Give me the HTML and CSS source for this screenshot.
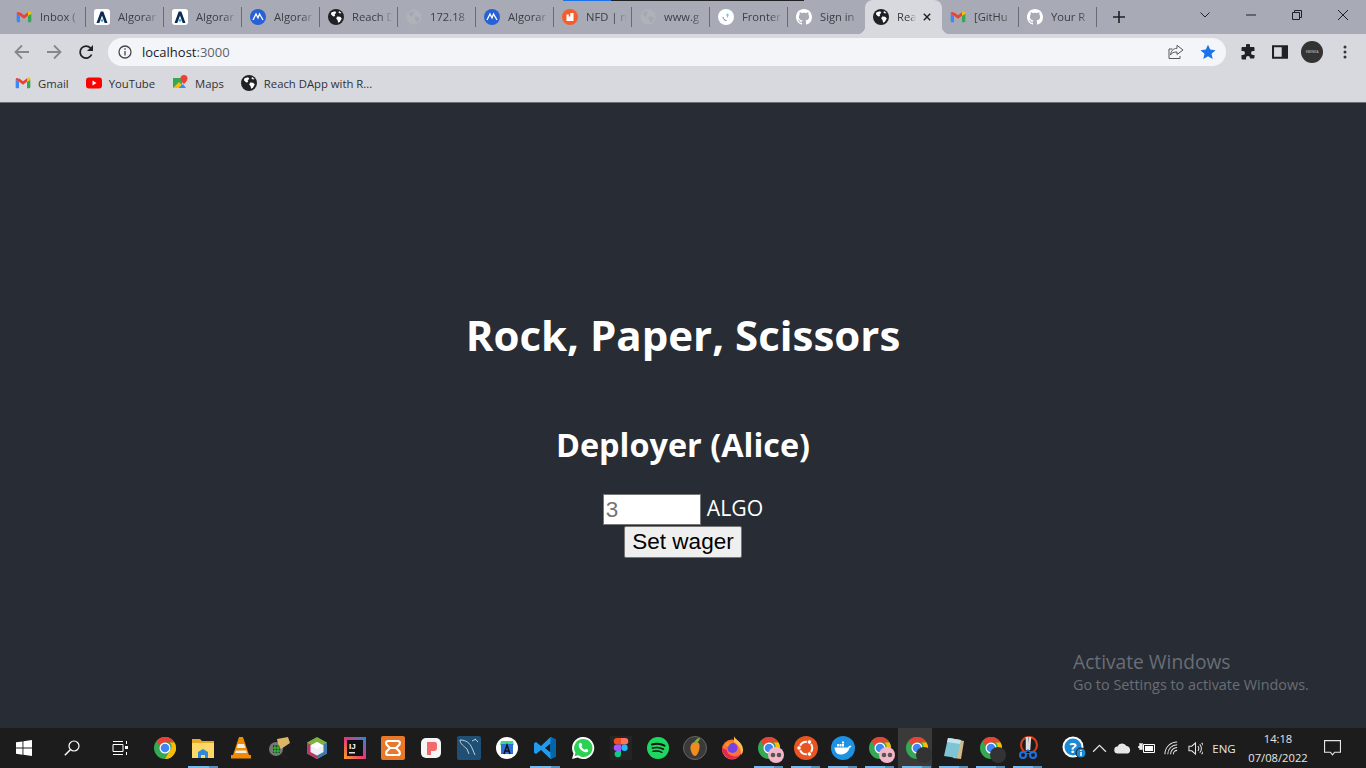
FILE: index.html
```html
<!DOCTYPE html>
<html lang="en">
<head>
  <meta charset="UTF-8" />
  <title>Rock, Paper, Scissors</title>
  <link rel="stylesheet" href="styles.css">
</head>
<body>

  <!-- shared icons -->
  <svg class="defs" aria-hidden="true">
    <symbol id="gmail" viewBox="0 0 24 24">
      <path fill="#4285f4" d="M1 7v11.5A1.5 1.5 0 002.5 20H6V10z"/>
      <path fill="#34a853" d="M18 10v10h3.500a1.500 1.500 0 001.500-1.500V7z"/>
      <path fill="#ea4335" d="M6 10V5l6 4.500L18 5v5l-6 4.500zM1 7c0-2 2.300-3 3.800-1.900L6 6v4z"/>
      <path fill="#fbbc04" d="M18 5l1.200-.9C20.700 3 23 4 23 6v1l-5 3z"/>
    </symbol>
    <symbol id="globe" viewBox="0 0 16 16">
      <circle cx="8" cy="8" r="8" fill="#202124"/>
      <path fill="#fff" d="M3.500 3.200l3.600-.9 1.200 1.500-1.700 1.600.6 1.500-2 .6-2.300-2.300zM9.200 7.400l3 .3 1.600 1.700-1.900 3.300-1.700 1-.7-2.800-1.300-1.500zM11 1.900l2.500 2-1.500.6-1.500-1.100z"/>
    </symbol>
    <symbol id="globe-grey" viewBox="0 0 16 16">
      <circle cx="8" cy="8" r="7.500" fill="#b0b2b9"/>
      <path fill="#a6a8b0" d="M3.500 3.200l3.600-.9 1.200 1.500-1.700 1.600.6 1.500-2 .6-2.300-2.300zM9.200 7.400l3 .3 1.600 1.700-1.900 3.300-1.700 1-.7-2.800-1.300-1.500z"/>
    </symbol>
    <symbol id="algo-a" viewBox="0 0 16 16">
      <rect width="16" height="16" rx="3" fill="#fff"/>
      <path fill="#0b2a55" d="M6.700 2.500h2.600L13.500 14h-2.800L8 6.500 5.300 14H2.500z"/>
      <circle cx="8" cy="11.500" r="1.300" fill="#2aa8e0"/>
    </symbol>
    <symbol id="algo-m" viewBox="0 0 16 16">
      <circle cx="8" cy="8" r="8" fill="#2860d6"/>
      <path fill="none" stroke="#fff" stroke-width="1.300" d="M3 11l3-6 2 4 1.500-4 3.500 6"/>
    </symbol>
    <symbol id="nfd" viewBox="0 0 16 16">
      <circle cx="8" cy="8" r="8" fill="#f65c2e"/>
      <path fill="#fff" d="M4.500 5.500h2.300v2h1.500V4h3.200v8h-7z"/>
    </symbol>
    <symbol id="frontend" viewBox="0 0 16 16">
      <circle cx="8" cy="8" r="8" fill="#fff"/>
      <path fill="none" stroke="#4f7fd8" stroke-width="1" d="M5 8c0 2 1.500 3.500 3.500 3.500"/>
      <path stroke="#7cc4e8" stroke-width="1.200" d="M9.500 4.500v4M11 6h-3"/>
    </symbol>
    <symbol id="github" viewBox="0 0 16 16">
      <circle cx="8" cy="8" r="8" fill="#a8abb6"/>
      <path fill="#fff" d="M8 0C3.580 0 0 3.580 0 8c0 3.540 2.290 6.530 5.470 7.590.4.070.55-.17.55-.38 0-.19-.01-.82-.01-1.490-2.010.37-2.530-.49-2.690-.94-.09-.23-.48-.94-.82-1.130-.28-.15-.68-.52-.01-.53.63-.01 1.080.58 1.230.82.72 1.210 1.870.87 2.330.66.070-.52.28-.87.51-1.070-1.780-.2-3.640-.89-3.640-3.950 0-.87.31-1.590.82-2.150-.08-.2-.36-1.020.08-2.120 0 0 .67-.21 2.200.82.64-.18 1.320-.27 2-.27.68 0 1.360.09 2 .27 1.530-1.040 2.200-.82 2.200-.82.44 1.100.16 1.920.08 2.120.51.56.82 1.270.82 2.150 0 3.070-1.870 3.750-3.650 3.950.29.25.54.73.54 1.480 0 1.070-.01 1.930-.01 2.200 0 .21.15.46.55.38A8.013 8.013 0 0016 8c0-4.420-3.580-8-8-8z"/>
    </symbol>
    <symbol id="chrome" viewBox="0 0 24 24">
      <circle cx="12" cy="12" r="11" fill="#34a853"/>
      <path fill="#ea4335" d="M12 1a11 11 0 019.530 5.500H12a5.500 5.500 0 00-5.200 3.700L3.600 4.900A11 11 0 0112 1z"/>
      <path fill="#fbbc04" d="M21.530 6.500A11 11 0 0112 23l4.760-8.250a5.500 5.500 0 000-8.250z"/>
      <circle cx="12" cy="12" r="5.500" fill="#fff"/>
      <circle cx="12" cy="12" r="4.300" fill="#4285f4"/>
    </symbol>
  </svg>

  <div class="browser">
    <div class="progress"><span class="progress-blue"></span><span class="progress-dark"></span></div>

    <div class="tabstrip">
      <div class="tab"><svg class="favicon"><use href="#gmail"/></svg><span class="tab-label">Inbox (</span></div>
      <div class="tab"><svg class="favicon"><use href="#algo-a"/></svg><span class="tab-label">Algorar</span></div>
      <div class="tab"><svg class="favicon"><use href="#algo-a"/></svg><span class="tab-label">Algorar</span></div>
      <div class="tab"><svg class="favicon"><use href="#algo-m"/></svg><span class="tab-label">Algorar</span></div>
      <div class="tab"><svg class="favicon"><use href="#globe"/></svg><span class="tab-label">Reach D</span></div>
      <div class="tab"><svg class="favicon"><use href="#globe-grey"/></svg><span class="tab-label">172.18</span></div>
      <div class="tab"><svg class="favicon"><use href="#algo-m"/></svg><span class="tab-label">Algorar</span></div>
      <div class="tab"><svg class="favicon"><use href="#nfd"/></svg><span class="tab-label">NFD | n</span></div>
      <div class="tab"><svg class="favicon"><use href="#globe-grey"/></svg><span class="tab-label">www.g</span></div>
      <div class="tab"><svg class="favicon"><use href="#frontend"/></svg><span class="tab-label">Fronter</span></div>
      <div class="tab tab-short tab-before-active"><svg class="favicon"><use href="#github"/></svg><span class="tab-label">Sign in</span></div>
      <div class="tab tab-short tab-active">
        <svg class="favicon"><use href="#globe"/></svg><span class="tab-label">Rea</span>
        <svg class="tab-close" viewBox="0 0 10 10"><path d="M1 1l8 8M9 1l-8 8"/></svg>
      </div>
      <div class="tab tab-short"><svg class="favicon"><use href="#gmail"/></svg><span class="tab-label">[GitHu</span></div>
      <div class="tab"><svg class="favicon"><use href="#github"/></svg><span class="tab-label">Your R</span></div>
      <svg class="new-tab" viewBox="0 0 12 12"><path d="M6 0v12M0 6h12"/></svg>
      <div class="window-controls">
        <span class="win-btn"><svg viewBox="0 0 10 6"><path d="M.5.500L5 5l4.500-4.500"/></svg></span>
        <span class="win-btn"><svg viewBox="0 0 10 2"><path d="M0 1h10"/></svg></span>
        <span class="win-btn"><svg viewBox="0 0 10 10"><path d="M.5 2.500h7v7h-7zM2.500 2.500v-2h7v7h-2"/></svg></span>
        <span class="win-btn"><svg viewBox="0 0 10 10"><path d="M0 0l10 10M10 0L0 10"/></svg></span>
      </div>
    </div>

    <div class="toolbar">
      <svg class="nav-icon nav-off" viewBox="0 0 16 16"><path d="M15 8H2M8 1.500L1.500 8 8 14.500"/></svg>
      <svg class="nav-icon nav-off" viewBox="0 0 16 16"><path d="M1 8h13M8 1.500L14.500 8 8 14.500"/></svg>
      <svg class="nav-icon" viewBox="0 0 16 16"><path d="M13.600 10.500A6 6 0 1112.500 4L14 5.500"/><path class="solid" d="M15 1v6H9z"/></svg>
      <div class="omnibox">
        <svg class="info-icon" viewBox="0 0 14 14"><circle cx="7" cy="7" r="6"/><path d="M7 6v4.500M7 3.300v1.400"/></svg>
        <span class="url">localhost<span class="url-port">:3000</span></span>
        <svg class="share-icon" viewBox="0 0 16 16"><path d="M9 1.500v-.2l6 4.700-6 4.500V8C5.500 8 3.500 9 2.500 11 3 7 5 4.500 9 4.300zM4.500 5H1v9.500h11V12"/></svg>
        <svg class="star-icon" viewBox="0 0 16 16"><path d="M8 .7l2.200 4.900 5.300.6-4 3.500 1.200 5.300L8 12.300 3.300 15l1.200-5.300-4-3.500 5.300-.6z"/></svg>
      </div>
      <svg class="tool-icon" viewBox="0 0 16 16"><path d="M6 1.500a2 2 0 014 0V3h3.500a1 1 0 011 1v3H13a2 2 0 000 4h1.500v2.500a1 1 0 01-1 1H10V14a2 2 0 00-4 0v1.500H2.500a1 1 0 01-1-1V11H3a2 2 0 000-4H1.500V4a1 1 0 011-1H6z"/></svg>
      <svg class="tool-icon" viewBox="0 0 14 14"><path fill-rule="evenodd" d="M0 1h14v12H0zM1.800 2.800v8.400h6.700V2.800z"/></svg>
      <svg class="avatar" viewBox="0 0 22 22"><circle cx="11" cy="11" r="11" fill="#333"/><text x="11" y="12.200" text-anchor="middle">KWENDA</text></svg>
      <svg class="menu-icon" viewBox="0 0 4 14"><circle cx="2" cy="2" r="1.500"/><circle cx="2" cy="7" r="1.500"/><circle cx="2" cy="12" r="1.500"/></svg>
    </div>

    <div class="bookmarks">
      <span class="bookmark"><svg class="favicon"><use href="#gmail"/></svg>Gmail</span>
      <span class="bookmark"><svg class="favicon" viewBox="0 0 16 16"><rect y="2.500" width="16" height="11" rx="3" fill="#f00"/><path fill="#fff" d="M6.500 5.500v5L10.500 8z"/></svg>YouTube</span>
      <span class="bookmark"><svg class="favicon" viewBox="0 0 16 16"><path fill="#34a853" d="M1 3h9v10H1z"/><path fill="#fbbc04" d="M1 13l6-6 3 3-3 3z"/><path fill="#4285f4" d="M7 13l4-4 3 4z"/><path fill="#ea4335" d="M12 0a3.500 3.500 0 013.500 3.500C15.500 6 12 9 12 9S8.500 6 8.500 3.500A3.500 3.500 0 0112 0z"/></svg>Maps</span>
      <span class="bookmark"><svg class="favicon"><use href="#globe"/></svg>Reach DApp with R...</span>
    </div>
  </div>

  <main class="app">
    <h1 class="app-title">Rock, Paper, Scissors</h1>
    <h2 class="app-role">Deployer (Alice)</h2>
    <div class="wager-row">
      <input class="wager-input" type="number" placeholder="3" />
      <span class="wager-unit">ALGO</span>
    </div>
    <button class="wager-btn">Set wager</button>

    <div class="activate">
      <div class="activate-title">Activate Windows</div>
      <div class="activate-sub">Go to Settings to activate Windows.</div>
    </div>
  </main>

  <footer class="taskbar">
    <span class="sys-btn"><svg viewBox="0 0 16 16" class="sys-icon"><path fill="#fff" d="M0 2.300l6.500-.9v6.200H0zM7.400 1.300L16 0v7.600H7.400zM0 8.500h6.500v6.200L0 13.700zM7.400 8.500H16V16l-8.600-1.200z"/></svg></span>
    <span class="sys-btn"><svg viewBox="0 0 16 16" class="sys-icon"><circle cx="10" cy="6" r="5" fill="none" stroke="#fff" stroke-width="1.200"/><path stroke="#fff" stroke-width="1.400" d="M6.300 9.700L.8 15.200"/></svg></span>
    <span class="sys-btn"><svg viewBox="0 0 16 16" class="sys-icon"><path fill="none" stroke="#fff" d="M1 4.500h10v7H1zM1 1.500h10M1 14.500h10M14.500 1v3M14.500 12v3"/><rect x="13" y="6" width="3" height="3" fill="#fff"/></svg></span>

    <div class="task-icons">
      <span class="task"><svg viewBox="0 0 24 24"><use href="#chrome"/></svg></span>
      <span class="task running"><svg viewBox="0 0 24 24"><path fill="#e8a92a" d="M1 3h8l2 2h12v17H1z"/><path fill="#fbd867" d="M1 7h22v15H1z"/><path fill="#2e8ad8" d="M7 22v-6l5-3 5 3v6h-3v-3h-4v3z"/></svg></span>
      <span class="task"><svg viewBox="0 0 24 24"><path fill="#f08a00" d="M10 1h4l6 18H4z"/><path fill="#eee" d="M8.900 8h6.200l1.300 4H7.600zM6.800 14.500l-.6 2.500h11.600l-.6-2.500z"/><path fill="#f08a00" d="M2 19h20v3.500H2z"/></svg></span>
      <span class="task"><svg viewBox="0 0 24 24"><circle cx="9" cy="13" r="7" fill="#777"/><rect x="6" y="9" width="7" height="8" fill="#184d18"/><path stroke="#3fc43f" d="M8 9v8M11 9v8M6 12h7M6 15h7"/><path fill="#d9b766" d="M10 3l11-2 2 6-9 6-3-5z"/><path stroke="#222" stroke-width="2" d="M15 18l5 5"/></svg></span>
      <span class="task"><svg viewBox="0 0 24 24"><path fill="#7fb241" d="M12 1l10 5.500v11L12 23 2 17.500v-11z"/><path fill="#3d78b5" d="M22 6.500v11L12 23v-4l6-3V9z"/><path fill="#b83a6b" d="M2 6.500v11L12 23v-4l-6-3V9z"/><path fill="#f0f0f0" d="M12 6l6.500 3.500v6.500L12 19.500 5.500 16V9.500z"/><path fill="#fff" d="M12 6l6.500 3.500L12 13 5.500 9.500z"/></svg></span>
      <span class="task"><svg viewBox="0 0 24 24"><defs><linearGradient id="ij" x1="0" y1="1" x2="1" y2="0"><stop offset="0" stop-color="#f9a11b"/><stop offset=".5" stop-color="#e5347f"/><stop offset="1" stop-color="#1a8fe3"/></linearGradient></defs><rect x="1" y="1" width="22" height="22" fill="url(#ij)"/><rect x="4" y="4" width="16" height="16" fill="#111"/><text class="ij-text" x="6" y="12.500">IJ</text><rect x="6" y="16" width="6" height="1.500" fill="#ddd"/></svg></span>
      <span class="task"><svg viewBox="0 0 24 24"><rect width="24" height="24" rx="2" fill="#e8782a"/><path fill="none" stroke="#fff" stroke-width="2.200" d="M7 5h10c2 0 3 3 0 5l-2 2 2 2c3 2 2 5 0 5H7c-2 0-3-3 0-5l2-2-2-2c-3-2-2-5 0-5zM9 12h6"/></svg></span>
      <span class="task"><svg viewBox="0 0 24 24"><rect x="2" y="2" width="20" height="20" rx="5" fill="#f6f6f6"/><path fill="#f26a6a" d="M8 6h8a2 2 0 012 2v4a3 3 0 01-3 3h-3v4H8z"/></svg></span>
      <span class="task"><svg viewBox="0 0 24 24"><rect width="24" height="24" rx="2" fill="#1f4f75"/><path fill="none" stroke="#cfdbe4" stroke-width=".9" d="M3 4c6 0 10 3 12 8l3 7M3 4c0 4 4 6 7 9l2 5M18 3l3 3M15 5l4-2"/></svg></span>
      <span class="task"><svg viewBox="0 0 24 24"><circle cx="12" cy="12" r="11" fill="#fff"/><path fill="#3ddc84" d="M6 5h12l1 4H5z"/><rect x="6" y="8" width="12" height="10" fill="#2a6fdb"/><path fill="none" stroke="#111" stroke-width="1.500" d="M9 18l3-9 3 9M10 15h4"/></svg></span>
      <span class="task running"><svg viewBox="0 0 24 24"><path fill="#1f9cf0" d="M17.500 1L23 3.500v17L17.500 23 8 14l-5 4-2-1.200V7.200L3 6l5 4zm0 6.500L12 12l5.500 4.500z"/><path fill="#0065a9" d="M17.500 1L23 3.500v17L17.500 23z"/></svg></span>
      <span class="task"><svg viewBox="0 0 24 24"><path fill="#fff" d="M12 1a11 11 0 00-9.500 16.500L1 23l5.700-1.500A11 11 0 1012 1z"/><path fill="#2ad152" d="M12 3a9 9 0 00-7.600 13.700l-.9 3.600 3.700-1A9 9 0 1012 3z"/><path fill="#fff" d="M8.800 7c-.8.500-1.300 1.500-1 3 .7 3 3.200 5.500 6.200 6.200 1.500.3 2.600-.2 3-1 .3-.6.300-1.200.1-1.400l-2.200-1.100-1.100 1.100c-1.500-.5-3-2-3.500-3.500l1-1.100L10.200 7c-.2-.2-1-.3-1.400 0z"/></svg></span>
      <span class="task"><svg viewBox="0 0 24 24"><rect x="1" y="0" width="22" height="24" fill="#242424"/><path fill="#f24e1e" d="M8 2h4v6.500H8a3.200 3.200 0 010-6.500z"/><path fill="#ff7262" d="M12 2h4a3.200 3.200 0 010 6.500h-4z"/><path fill="#a259ff" d="M8 8.500h4V15H8a3.200 3.200 0 010-6.500z"/><circle cx="15.500" cy="11.700" r="3.200" fill="#1abcfe"/><path fill="#0acf83" d="M8 15h4v3.200a3.200 3.200 0 11-4-3.200z"/></svg></span>
      <span class="task"><svg viewBox="0 0 24 24"><circle cx="12" cy="12" r="11" fill="#1ed760"/><path fill="none" stroke="#191414" stroke-width="2" stroke-linecap="round" d="M6 8.500c4-1 9-.8 12.500 1.200"/><path fill="none" stroke="#191414" stroke-width="1.700" stroke-linecap="round" d="M6.500 12c3.500-.8 8-.5 11 1.200"/><path fill="none" stroke="#191414" stroke-width="1.400" stroke-linecap="round" d="M7 15.300c3-.6 6.500-.4 9 1"/></svg></span>
      <span class="task"><svg viewBox="0 0 24 24"><circle cx="12" cy="12" r="11.500" fill="#3a3a3a" stroke="#666"/><path fill="#f08c1e" d="M12.500 6c3.500 0 4.500 2 4 6-.4 3.500-2.500 8-4.500 8s-4-3.500-4.500-7c-.4-3.500 1.500-7 5-7z"/><path fill="#7cb342" d="M11 7c1-3 3-5 6-5-.5 3-2.500 5-6 5z"/></svg></span>
      <span class="task"><svg viewBox="0 0 24 24"><circle cx="12" cy="13.500" r="10" fill="#ff7139"/><path fill="#ffbd4f" d="M14 0c1 4 8 5 9 13 .3 3-1 5-2 6 1-5-3-11-7-13z"/><path fill="#e22850" d="M2 12c0 6 5 11 10 11s8-3 9-5c-3 3-8 3-11 1-2-1-3-3-3-5z"/><circle cx="12.500" cy="12" r="5" fill="#7542e5"/><path fill="#ff980e" d="M5 9c2-3 5-4 8-3l-3 2-2 3z"/></svg></span>
      <span class="task running">
        <svg viewBox="0 0 24 24"><use href="#chrome"/></svg>
        <svg class="task-badge" viewBox="0 0 16 16"><circle cx="8" cy="8" r="8" fill="#f4b7c9"/><circle cx="5" cy="8" r="2.300" fill="#555"/><circle cx="11" cy="8" r="2.300" fill="#555"/></svg>
      </span>
      <span class="task running"><svg viewBox="0 0 24 24"><circle cx="12" cy="12" r="12" fill="#e95420"/><circle cx="12" cy="12" r="6.300" fill="none" stroke="#fff" stroke-width="2"/><circle cx="5" cy="12" r="2.300" fill="#fff" stroke="#e95420"/><circle cx="15.500" cy="6" r="2.300" fill="#fff" stroke="#e95420"/><circle cx="15.500" cy="18" r="2.300" fill="#fff" stroke="#e95420"/></svg></span>
      <span class="task running"><svg viewBox="0 0 24 24"><circle cx="12" cy="12" r="12" fill="#1d91e3"/><path fill="#fff" d="M3.500 11.500h13.500c.5-1.500 2-2 3.500-1.500-.5 1-1 1.500-2 1.700C17.500 16 14 18.500 9.500 18.500c-4 0-5.500-3-6-7z"/><path fill="#fff" d="M6 8h2v2.500H6zM8.500 8h2v2.500h-2zM11 8h2v2.500h-2zM11 5.500h2v2h-2z"/></svg></span>
      <span class="task running">
        <svg viewBox="0 0 24 24"><use href="#chrome"/></svg>
        <svg class="task-badge" viewBox="0 0 16 16"><circle cx="8" cy="8" r="8" fill="#f4b7c9"/><circle cx="5" cy="8" r="2.300" fill="#555"/><circle cx="11" cy="8" r="2.300" fill="#555"/></svg>
      </span>
      <span class="task running task-current">
        <svg viewBox="0 0 24 24"><use href="#chrome"/></svg>
        <svg class="task-badge" viewBox="0 0 16 16"><circle cx="8" cy="8" r="8" fill="#333"/></svg>
      </span>
      <span class="task running"><svg viewBox="0 0 24 24"><path fill="#d2b98c" d="M8 2l14 3-3 18-8-1z"/><path fill="#7ec4d4" d="M6 2l13 2-4 18L2 20z"/><path fill="#c4e4ea" d="M6 2l13 2-1 4L5 6z"/></svg></span>
      <span class="task running">
        <svg viewBox="0 0 24 24"><use href="#chrome"/></svg>
        <svg class="task-badge" viewBox="0 0 16 16"><circle cx="8" cy="8" r="8" fill="#333"/></svg>
      </span>
      <span class="task running"><svg viewBox="0 0 24 24"><circle cx="13" cy="9" r="8" fill="none" stroke="#d1401f" stroke-width="2.200"/><path stroke="#ddd" stroke-width="2.500" d="M11 1v13M14 1l-1 13"/><circle cx="7" cy="19" r="3" fill="none" stroke="#1a73e8" stroke-width="2"/><circle cx="17" cy="19" r="3" fill="none" stroke="#1a73e8" stroke-width="2"/><path stroke="#1a73e8" stroke-width="1.500" d="M9 17l3-3 3 3"/></svg></span>
    </div>

    <div class="tray">
      <span class="tray-item tray-help"><svg viewBox="0 0 24 24"><circle cx="11" cy="11" r="10.500" fill="#fff"/><circle cx="11" cy="11" r="8.500" fill="#1a8ad6"/><text class="help-text" x="11" y="16.500" text-anchor="middle">?</text><circle cx="19" cy="17" r="5" fill="#1a8ad6" stroke="#1c1c1c"/><path stroke="#fff" stroke-width="1.500" d="M19 16v4M19 14v1"/></svg></span>
      <span class="tray-item"><svg class="tray-line" viewBox="0 0 14 8"><path d="M1 7l6-6 6 6"/></svg></span>
      <span class="tray-item"><svg viewBox="0 0 18 12" class="tray-cloud"><path fill="#e6e6e6" d="M4 11.500a3.500 3.500 0 01-.5-7A5 5 0 0112.500 4 4 4 0 0114 11.500z"/></svg></span>
      <span class="tray-item"><svg viewBox="0 0 18 12" class="tray-cloud"><path fill="none" stroke="#fff" d="M5.500 2.500h11v8h-11z"/><rect x="7" y="4" width="8" height="5" fill="#fff"/><path stroke="#fff" stroke-width="1.300" d="M0 5h4M2 1v2M4 1v2M2 3h2v4H2z"/></svg></span>
      <span class="tray-item"><svg class="tray-line" viewBox="0 0 16 16"><path d="M1 14a13 13 0 0113-13M4 14A10 10 0 0114 4M7 14a7 7 0 017-7M10 14a4 4 0 014-4"/></svg></span>
      <span class="tray-item"><svg class="tray-line" viewBox="0 0 16 16"><path d="M1 5.500h3L8 2v12l-4-3.500H1zM10.500 5.500a3.500 3.500 0 010 5M12.500 3.500a6.500 6.500 0 010 9M14.500 2a8.500 8.500 0 010 12"/></svg></span>
      <span class="tray-lang">ENG</span>
      <span class="tray-clock"><span>14:18</span><span>07/08/2022</span></span>
      <span class="tray-notify"><svg class="tray-line" viewBox="0 0 16 15"><path d="M.5.500h15v11H10L8 14l-2-2.500H.5z"/></svg></span>
    </div>
  </footer>

</body>
</html>
```

FILE: styles.css
```css
html, body {
  margin: 0;
  height: 100%;
  overflow: hidden;
}
body {
  display: flex;
  flex-direction: column;
  height: 768px;
  font-family: "Open Sans", "Liberation Sans", sans-serif;
  background: #282c34;
}
.defs {
  position: absolute;
  width: 0;
  height: 0;
}

/* browser chrome */
.browser {
  position: relative;
  flex: none;
}
.progress {
  position: absolute;
  top: 0;
  left: 563px;
  display: flex;
  height: 1px;
}
.progress-blue {
  width: 48px;
  background: #1a73e8;
}
.progress-dark {
  width: 193px;
  background: #202124;
}
.tabstrip {
  display: flex;
  align-items: stretch;
  height: 34px;
  padding-left: 8px;
  background: #a8abb6;
}
.tab {
  position: relative;
  display: flex;
  align-items: center;
  flex: none;
  width: 78px;
  padding: 0 3px 1px 8px;
  box-sizing: border-box;
  font-size: 11.200px;
  color: #3c3e44;
}
.tab-short {
  width: 77px;
}
.tab::after {
  content: "";
  position: absolute;
  right: 0;
  top: 7px;
  bottom: 7px;
  width: 1px;
  background: #6a6c74;
}
.tab-before-active::after, .tab-active::after {
  display: none;
}
.tab-active {
  padding-right: 8px;
  background: #d8d9de;
  border-radius: 8px 8px 0 0;
  color: #3c3e44;
}
.tab-active::before {
  content: "";
  position: absolute;
  left: -8px;
  right: -8px;
  bottom: 0;
  height: 8px;
  z-index: 0;
  background:
    radial-gradient(circle at 0 0, #a8abb6 8px, #d8d9de 8.500px) left / 8px 8px no-repeat,
    radial-gradient(circle at 100% 0, #a8abb6 8px, #d8d9de 8.500px) right / 8px 8px no-repeat;
}
.favicon {
  flex: none;
  width: 16px;
  height: 16px;
  margin-right: 8px;
}
.tab-label {
  flex: 1;
  min-width: 0;
  overflow: hidden;
  white-space: nowrap;
  -webkit-mask-image: linear-gradient(to right, #000 65%, transparent 95%);
  mask-image: linear-gradient(to right, #000 65%, transparent 95%);
}
.tab-close {
  flex: none;
  width: 8px;
  height: 8px;
  margin: 0 3px 0 6px;
  fill: none;
  stroke: #202124;
  stroke-width: 1.800;
}
.new-tab {
  width: 12px;
  height: 12px;
  margin: 11px 0 0 16px;
  fill: none;
  stroke: #202124;
  stroke-width: 1.600;
}
.window-controls {
  display: flex;
  margin-left: auto;
  margin-top: -4px;
}
.win-btn {
  display: flex;
  align-items: center;
  justify-content: center;
  width: 46px;
}
.win-btn svg {
  width: 10px;
  height: 10px;
  fill: none;
  stroke: #202124;
  stroke-width: 1;
}

.toolbar {
  display: flex;
  align-items: center;
  height: 36px;
  padding: 0 0 0 14px;
  box-sizing: border-box;
  background: #d8d9de;
}
.nav-icon {
  width: 16px;
  height: 16px;
  margin-right: 16px;
  fill: none;
  stroke: #202124;
  stroke-width: 1.800;
}
.nav-icon .solid {
  fill: #202124;
  stroke: none;
}
.nav-off {
  stroke: #85878e;
}
.omnibox {
  display: flex;
  align-items: center;
  width: 1118px;
  height: 28px;
  margin-left: -2px;
  margin-right: 14px;
  padding: 0 10px;
  box-sizing: border-box;
  border-radius: 14px;
  background: #f4f5f8;
  font-size: 13px;
  color: #202124;
}
.info-icon {
  width: 14px;
  height: 14px;
  margin-right: 10px;
  fill: none;
  stroke: #45474c;
  stroke-width: 1.300;
}
.url-port {
  color: #5f6368;
}
.share-icon {
  width: 16px;
  height: 16px;
  margin-left: auto;
  margin-right: 16px;
  fill: none;
  stroke: #55575c;
  stroke-width: 1;
}
.star-icon {
  width: 16px;
  height: 16px;
  fill: #1a73e8;
}
.tool-icon {
  width: 16px;
  height: 16px;
  margin-right: 16px;
  fill: #202124;
}
.avatar {
  width: 22px;
  height: 22px;
  margin-left: -3px;
  margin-right: 20px;
}
.avatar text {
  font-size: 3px;
  fill: #ddd;
}
.menu-icon {
  width: 4px;
  height: 14px;
  fill: #35363a;
}

.bookmarks {
  display: flex;
  align-items: center;
  gap: 17px;
  height: 33px;
  padding: 0 0 6px 15px;
  box-sizing: border-box;
  background: #d8d9de;
  border-bottom: 1px solid #6f7075;
  font-size: 11.300px;
  color: #2f3136;
}
.bookmark {
  display: flex;
  align-items: center;
}
.bookmark .favicon {
  margin-right: 7px;
}

/* page */
.app {
  position: relative;
  flex: 1;
  display: flex;
  flex-direction: column;
  align-items: center;
  color: #fff;
  background: #282c34;
}
.app-title {
  margin: 202px 0 0;
  font-size: 42px;
  font-weight: 700;
  line-height: 60px;
}
.app-role {
  margin: 59px 0 0;
  font-size: 32.400px;
  font-weight: 700;
  line-height: 40px;
}
.wager-row {
  display: flex;
  align-items: center;
  margin: 30px 0 0;
}
.wager-input {
  width: 98px;
  height: 31px;
  padding: 1px 2px;
  box-sizing: border-box;
  border: 1px solid #767676;
  background: #fff;
  font-family: "Liberation Sans", Arial, sans-serif;
  font-size: 22.500px;
  appearance: textfield;
}
.wager-input::placeholder {
  color: #757575;
}
.wager-unit {
  margin: 0 0 4px 6px;
  font-size: 21.200px;
  line-height: 24px;
}
.wager-btn {
  width: 118px;
  height: 32px;
  margin: 1px 0 0;
  padding: 0;
  box-sizing: border-box;
  border: 1px solid #767676;
  border-radius: 2px;
  background: #efefef;
  color: #000;
  font-family: "Liberation Sans", Arial, sans-serif;
  font-size: 22.500px;
}
.activate {
  position: absolute;
  left: 1073px;
  top: 546px;
  color: #6a6e75;
}
.activate-title {
  font-size: 19.200px;
  line-height: 25px;
}
.activate-sub {
  margin-top: 2px;
  font-size: 14.400px;
  line-height: 18px;
}

/* windows taskbar */
.taskbar {
  display: flex;
  align-items: stretch;
  flex: none;
  height: 40px;
  background: #1c1c1c;
  color: #e6e6e6;
}
.sys-btn {
  display: flex;
  align-items: center;
  justify-content: center;
  width: 48px;
}
.sys-icon {
  width: 16px;
  height: 16px;
}
.task-icons {
  display: flex;
  margin-left: 2px;
}
.task {
  position: relative;
  display: flex;
  align-items: center;
  justify-content: center;
  width: 38px;
}
.task:nth-child(n+14) {
  width: 37px;
}
.task:nth-child(14) {
  margin-left: -1px;
}
.task > svg:first-child {
  width: 24px;
  height: 24px;
}
.task .task-badge {
  position: absolute;
  right: 3px;
  bottom: 5px;
  width: 16px;
  height: 16px;
}
.running::after {
  content: "";
  position: absolute;
  left: 4px;
  right: 4px;
  bottom: 0;
  height: 2px;
  background: linear-gradient(to right, #76b9ed 70%, #5b8fb8 70%);
}
.task-current {
  background: linear-gradient(#3a3a3a, #3a3a3a) 0 0 / 34px 100% no-repeat;
}
.ij-text {
  font-family: "Liberation Sans", Arial, sans-serif;
  font-size: 8px;
  font-weight: 700;
  fill: #fff;
}
.tray {
  display: flex;
  align-items: center;
  margin-left: auto;
  padding-right: 17px;
}
.tray-item {
  display: flex;
  align-items: center;
  justify-content: center;
  width: 24px;
}
.tray-help {
  width: 27px;
}
.tray-help svg {
  width: 24px;
  height: 24px;
}
.help-text {
  font-size: 15px;
  font-weight: 700;
  fill: #fff;
}
.tray-line {
  width: 15px;
  height: 15px;
  fill: none;
  stroke: #e6e6e6;
  stroke-width: 1.100;
}
.tray-cloud {
  width: 18px;
  height: 12px;
}
.tray-lang {
  width: 34px;
  font-size: 11.500px;
  text-align: center;
}
.tray-clock {
  display: flex;
  flex-direction: column;
  align-items: center;
  width: 74px;
  font-size: 11.200px;
  line-height: 19px;
}
.tray-notify {
  display: flex;
  justify-content: center;
  width: 34px;
}
.tray-notify svg {
  width: 17px;
  height: 16px;
}
```
